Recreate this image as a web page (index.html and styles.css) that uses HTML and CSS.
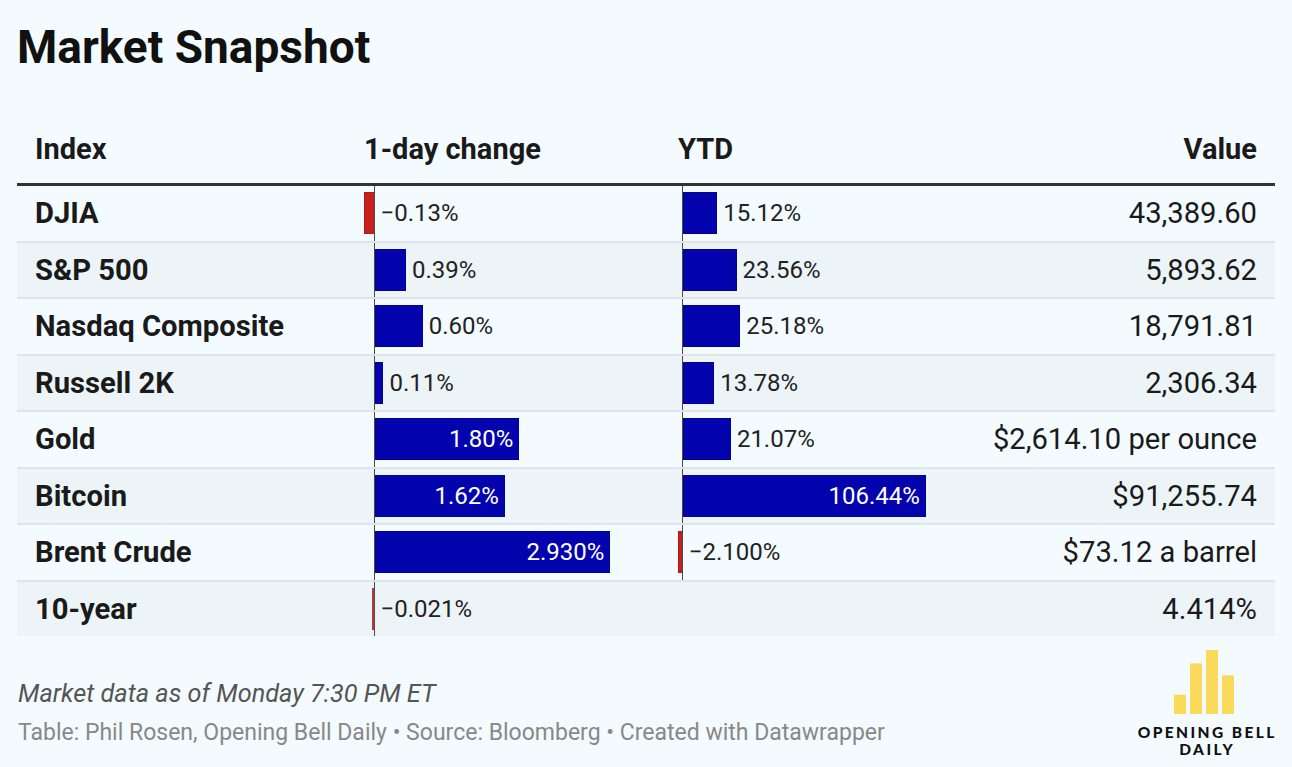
FILE: index.html
```html
<!DOCTYPE html>
<html lang="en">
<head>
<meta charset="utf-8">
<title>Market Snapshot</title>
<link rel="stylesheet" href="styles.css">
</head>
<body>
<div class="page">
  <h1 class="title">Market Snapshot</h1>

  <div class="table">
    <div class="row head">
      <div class="cell name">Index</div>
      <div class="cell hbar">1-day change</div>
      <div class="cell hbar">YTD</div>
      <div class="cell value">Value</div>
    </div>

    <div class="row">
      <div class="cell name">DJIA</div>
      <div class="cell bcell"><div class="neg n1"><div class="bar red" style="width:10.5px"></div></div><div class="pos"><span class="lbl">−0.13%</span></div></div>
      <div class="cell bcell"><div class="neg n2"></div><div class="pos"><div class="bar blue" style="width:34.5px"></div><span class="lbl">15.12%</span></div></div>
      <div class="cell value">43,389.60</div>
    </div>

    <div class="row alt">
      <div class="cell name">S&amp;P 500</div>
      <div class="cell bcell"><div class="neg n1"></div><div class="pos"><div class="bar blue" style="width:31.4px"></div><span class="lbl">0.39%</span></div></div>
      <div class="cell bcell"><div class="neg n2"></div><div class="pos"><div class="bar blue" style="width:53.8px"></div><span class="lbl">23.56%</span></div></div>
      <div class="cell value">5,893.62</div>
    </div>

    <div class="row">
      <div class="cell name">Nasdaq Composite</div>
      <div class="cell bcell"><div class="neg n1"></div><div class="pos"><div class="bar blue" style="width:48.3px"></div><span class="lbl">0.60%</span></div></div>
      <div class="cell bcell"><div class="neg n2"></div><div class="pos"><div class="bar blue" style="width:57.5px"></div><span class="lbl">25.18%</span></div></div>
      <div class="cell value">18,791.81</div>
    </div>

    <div class="row alt">
      <div class="cell name">Russell 2K</div>
      <div class="cell bcell"><div class="neg n1"></div><div class="pos"><div class="bar blue" style="width:8.9px"></div><span class="lbl">0.11%</span></div></div>
      <div class="cell bcell"><div class="neg n2"></div><div class="pos"><div class="bar blue" style="width:31.5px"></div><span class="lbl">13.78%</span></div></div>
      <div class="cell value">2,306.34</div>
    </div>

    <div class="row">
      <div class="cell name">Gold</div>
      <div class="cell bcell"><div class="neg n1"></div><div class="pos"><div class="bar blue inside" style="width:144.9px">1.80%</div></div></div>
      <div class="cell bcell"><div class="neg n2"></div><div class="pos"><div class="bar blue" style="width:48.1px"></div><span class="lbl">21.07%</span></div></div>
      <div class="cell value">$2,614.10 per ounce</div>
    </div>

    <div class="row alt">
      <div class="cell name">Bitcoin</div>
      <div class="cell bcell"><div class="neg n1"></div><div class="pos"><div class="bar blue inside" style="width:130.4px">1.62%</div></div></div>
      <div class="cell bcell"><div class="neg n2"></div><div class="pos"><div class="bar blue inside" style="width:243px">106.44%</div></div></div>
      <div class="cell value">$91,255.74</div>
    </div>

    <div class="row">
      <div class="cell name">Brent Crude</div>
      <div class="cell bcell"><div class="neg n1"></div><div class="pos"><div class="bar blue inside" style="width:235.9px">2.930%</div></div></div>
      <div class="cell bcell"><div class="neg n2"><div class="bar red" style="width:4.8px"></div></div><div class="pos"><span class="lbl">−2.100%</span></div></div>
      <div class="cell value">$73.12 a barrel</div>
    </div>

    <div class="row alt last">
      <div class="cell name">10-year</div>
      <div class="cell bcell"><div class="neg n1"><div class="bar red thin" style="width:2px"></div></div><div class="pos"><span class="lbl">−0.021%</span></div></div>
      <div class="cell bcell"></div>
      <div class="cell value">4.414%</div>
    </div>
  </div>

  <div class="footer">
    <div class="notes">
      <p class="note">Market data as of Monday 7:30 PM ET</p>
      <p class="source">Table: Phil Rosen, Opening Bell Daily • Source: Bloomberg • Created with Datawrapper</p>
    </div>
    <div class="logo">
      <svg class="logo-bars" width="62" height="64" viewBox="0 0 62 64" aria-hidden="true">
        <rect x="0" y="44.7" width="12" height="19.3" fill="#fbd95b"/>
        <rect x="16" y="13.4" width="12" height="50.6" fill="#fbd95b"/>
        <rect x="32" y="0" width="12" height="64" fill="#fbd95b"/>
        <rect x="48" y="25.4" width="12" height="38.6" fill="#fbd95b"/>
      </svg>
      <div class="logo-line">OPENING BELL</div>
      <div class="logo-line">DAILY</div>
    </div>
  </div>
</div>
</body>
</html>
```
FILE: styles.css
```css
* { box-sizing: border-box; }

html, body {
  margin: 0;
  padding: 0;
  background: #f3fbfe;
}

body {
  font-family: Roboto, "Liberation Sans", Arial, sans-serif;
  color: #1a1a1a;
}

.page {
  width: 1292px;
  height: 767px;
  padding: 19.5px 17px 0 17px;
  overflow: hidden;
}

.title {
  margin: 0;
  font-size: 46px;
  line-height: 55px;
  font-weight: 700;
  color: #111;
  letter-spacing: 0;
}

.table {
  margin-top: 40.5px;
}

.row {
  display: grid;
  grid-template-columns: 339px 314px 290px 315px;
  height: 56.5px;
  border-bottom: 2px solid #dde5e8;
  background: #f3fbfe;
}

.row.alt { background: #ecf4f7; }
.row.last { border-bottom: none; height: 54.5px; }

.row.head {
  height: 71px;
  border-bottom: 3px solid #333;
  background: transparent;
  align-items: start;
}

.cell {
  display: flex;
  align-items: center;
  min-width: 0;
}

.head .cell {
  padding-top: 17px;
  font-size: 29px;
  line-height: 34px;
  font-weight: 700;
  color: #1a1a1a;
}

.name {
  padding-left: 18px;
  font-size: 29.2px;
  font-weight: 700;
  color: #1a1a1a;
}

.hbar { padding-left: 8px; }

.value {
  justify-content: flex-end;
  padding-right: 18px;
  font-size: 29.2px;
  font-weight: 400;
  color: #1a1a1a;
  white-space: nowrap;
}

.bcell {
  padding: 0 8px;
  align-items: stretch;
}

.neg {
  display: flex;
  justify-content: flex-end;
  align-items: center;
  flex: none;
}
.n1 { width: 10.5px; }
.n2 { width: 4.8px; }

.pos {
  flex: 1;
  display: flex;
  align-items: center;
  border-left: 1px solid #4a4a4a;
  margin-left: -1px;
}

.bar {
  height: 42px;
  flex: none;
}

.bar.blue {
  background: #0404ae;
  box-shadow: inset 0 0 0 1px #03038c;
}

.bar.red {
  background: #c8201f;
  box-shadow: inset 0 0 0 1px #a91a19;
}

.bar.red.thin {
  background: #b83a38;
  box-shadow: none;
  margin-right: 1px;
}

.bar.inside {
  display: flex;
  align-items: center;
  justify-content: flex-end;
  padding-right: 6px;
  color: #fff;
  font-size: 24px;
  white-space: nowrap;
}

.lbl {
  margin-left: 6px;
  font-size: 24px;
  color: #222;
  white-space: nowrap;
}

.footer {
  display: flex;
  justify-content: space-between;
  align-items: flex-start;
  margin-top: 12px;
}

.notes {
  padding-top: 31px;
  padding-left: 1px;
}

.note {
  margin: 0;
  font-style: italic;
  font-size: 25.3px;
  line-height: 30px;
  color: #555;
}

.source {
  margin: 10px 0 0 0;
  font-size: 23px;
  line-height: 28px;
  color: #888;
}

.logo {
  display: flex;
  flex-direction: column;
  align-items: center;
  margin-right: -3px;
  margin-top: 2px;
  width: 144px;
}

.logo-bars {
  display: block;
  margin-left: -2px;
  margin-bottom: 10px;
}

.logo-line {
  font-family: Lato, "DejaVu Sans", sans-serif;
  font-weight: 900;
  font-size: 15.5px;
  line-height: 16.5px;
  letter-spacing: 2.4px;
  margin-right: -2.4px;
  text-align: center;
  white-space: nowrap;
  color: #111;
}
```
